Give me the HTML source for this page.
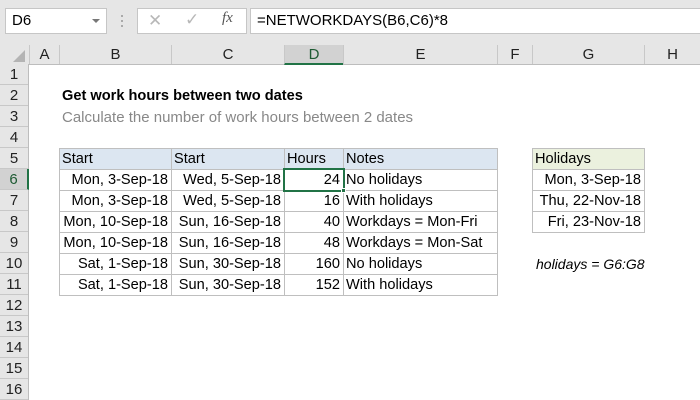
<!DOCTYPE html>
<html><head><meta charset="utf-8"><style>
body{margin:0;width:700px;height:400px;overflow:hidden;background:#fff;font-family:"Liberation Sans",Calibri,sans-serif;position:relative}
.a{position:absolute;box-sizing:border-box}
.t{font-size:14.6px;line-height:21px;white-space:nowrap;color:#000}
.r{text-align:right;padding-right:3px}
.l{padding-left:3px}
.hd{background:#e6e6e6;color:#222;font-size:15px;text-align:center;line-height:19px}
</style></head><body>
<div class="a" style="left:0;top:0;width:700px;height:45px;background:#e6e6e6"></div>
<div class="a" style="left:5px;top:8px;width:102px;height:26px;background:#fff;border:1px solid #c6c6c6"></div>
<div class="a t" style="left:12px;top:10px;font-size:15px">D6</div>
<div class="a" style="left:92px;top:19px;width:0;height:0;border-left:4px solid transparent;border-right:4px solid transparent;border-top:4px solid #777"></div>
<div class="a" style="left:121px;top:15px;width:2px;height:2px;background:#aaa;box-shadow:0 5px 0 #aaa,0 10px 0 #aaa"></div>
<div class="a" style="left:137px;top:8px;width:110px;height:26px;background:#fff;border:1px solid #c6c6c6"></div>
<div class="a" style="left:148px;top:11px;font-size:17px;color:#b8b8b8">✕</div>
<div class="a" style="left:185px;top:10px;font-size:17px;color:#b8b8b8">✓</div>
<div class="a" style="left:222px;top:10px;font-size:15px;font-style:italic;font-family:'Liberation Serif',serif;color:#555">fx</div>
<div class="a" style="left:250px;top:8px;width:460px;height:26px;background:#fff;border:1px solid #c6c6c6"></div>
<div class="a t" style="left:257px;top:10px;font-size:15px">=NETWORKDAYS(B6,C6)*8</div>
<div class="a" style="left:0;top:45px;width:700px;height:20px;background:#e6e6e6;border-bottom:1px solid #bdbdbd"></div>
<div class="a" style="left:13px;top:50px;width:0;height:0;border-left:12px solid transparent;border-bottom:12px solid #b4b4b4"></div>
<div class="a hd" style="left:29px;top:45px;width:30px;border-left:1px solid #c8c8c8">A</div>
<div class="a hd" style="left:59px;top:45px;width:112px;border-left:1px solid #c8c8c8">B</div>
<div class="a hd" style="left:171px;top:45px;width:113px;border-left:1px solid #c8c8c8">C</div>
<div class="a hd" style="left:284px;top:45px;width:59px;height:20px;background:#d2d2d2;border-left:1px solid #c8c8c8;border-bottom:2px solid #217346;color:#1e5b33">D</div>
<div class="a hd" style="left:343px;top:45px;width:154px;border-left:1px solid #c8c8c8">E</div>
<div class="a hd" style="left:497px;top:45px;width:35px;border-left:1px solid #c8c8c8">F</div>
<div class="a hd" style="left:532px;top:45px;width:112px;border-left:1px solid #c8c8c8">G</div>
<div class="a hd" style="left:644px;top:45px;width:56px;border-left:1px solid #c8c8c8">H</div>
<div class="a" style="left:0;top:65px;width:29px;height:335px;background:#e6e6e6;border-right:1px solid #bdbdbd"></div>
<div class="a hd" style="left:0;top:64px;width:28px;height:21px;line-height:21px;border-bottom:1px solid #c8c8c8">1</div>
<div class="a hd" style="left:0;top:85px;width:28px;height:21px;line-height:21px;border-bottom:1px solid #c8c8c8">2</div>
<div class="a hd" style="left:0;top:106px;width:28px;height:21px;line-height:21px;border-bottom:1px solid #c8c8c8">3</div>
<div class="a hd" style="left:0;top:127px;width:28px;height:21px;line-height:21px;border-bottom:1px solid #c8c8c8">4</div>
<div class="a hd" style="left:0;top:148px;width:28px;height:21px;line-height:21px;border-bottom:1px solid #c8c8c8">5</div>
<div class="a hd" style="left:0;top:169px;width:29px;height:21px;line-height:21px;background:#d2d2d2;border-right:2px solid #217346;color:#1e5b33;border-bottom:1px solid #c8c8c8">6</div>
<div class="a hd" style="left:0;top:190px;width:28px;height:21px;line-height:21px;border-bottom:1px solid #c8c8c8">7</div>
<div class="a hd" style="left:0;top:211px;width:28px;height:21px;line-height:21px;border-bottom:1px solid #c8c8c8">8</div>
<div class="a hd" style="left:0;top:232px;width:28px;height:21px;line-height:21px;border-bottom:1px solid #c8c8c8">9</div>
<div class="a hd" style="left:0;top:253px;width:28px;height:21px;line-height:21px;border-bottom:1px solid #c8c8c8">10</div>
<div class="a hd" style="left:0;top:274px;width:28px;height:21px;line-height:21px;border-bottom:1px solid #c8c8c8">11</div>
<div class="a hd" style="left:0;top:295px;width:28px;height:21px;line-height:21px;border-bottom:1px solid #c8c8c8">12</div>
<div class="a hd" style="left:0;top:316px;width:28px;height:21px;line-height:21px;border-bottom:1px solid #c8c8c8">13</div>
<div class="a hd" style="left:0;top:337px;width:28px;height:21px;line-height:21px;border-bottom:1px solid #c8c8c8">14</div>
<div class="a hd" style="left:0;top:358px;width:28px;height:21px;line-height:21px;border-bottom:1px solid #c8c8c8">15</div>
<div class="a hd" style="left:0;top:379px;width:28px;height:21px;line-height:21px;border-bottom:1px solid #c8c8c8">16</div>
<div class="a t" style="left:62px;top:86px;font-weight:bold;font-size:14.6px">Get work hours between two dates</div>
<div class="a t" style="left:62px;top:107px;color:#888;font-size:15px">Calculate the number of work hours between 2 dates</div>
<div class="a" style="left:59px;top:148px;width:439px;height:22px;background:#dce6f1"></div>
<div class="a" style="left:59px;top:148px;width:439px;height:148px;border:1px solid #bfbfbf"></div>
<div class="a" style="left:59px;top:169px;width:439px;height:1px;background:#bfbfbf"></div>
<div class="a" style="left:59px;top:190px;width:439px;height:1px;background:#bfbfbf"></div>
<div class="a" style="left:59px;top:211px;width:439px;height:1px;background:#bfbfbf"></div>
<div class="a" style="left:59px;top:232px;width:439px;height:1px;background:#bfbfbf"></div>
<div class="a" style="left:59px;top:253px;width:439px;height:1px;background:#bfbfbf"></div>
<div class="a" style="left:59px;top:274px;width:439px;height:1px;background:#bfbfbf"></div>
<div class="a" style="left:171px;top:148px;width:1px;height:148px;background:#bfbfbf"></div>
<div class="a" style="left:284px;top:148px;width:1px;height:148px;background:#bfbfbf"></div>
<div class="a" style="left:343px;top:148px;width:1px;height:148px;background:#bfbfbf"></div>
<div class="a t l" style="left:59px;top:149px">Start</div>
<div class="a t l" style="left:171px;top:149px">Start</div>
<div class="a t l" style="left:284px;top:149px">Hours</div>
<div class="a t l" style="left:343px;top:149px">Notes</div>

<div class="a t r" style="left:59px;top:170px;width:112px">Mon, 3-Sep-18</div>
<div class="a t r" style="left:171px;top:170px;width:113px">Wed, 5-Sep-18</div>
<div class="a t r" style="left:284px;top:170px;width:59px">24</div>
<div class="a t l" style="left:343px;top:170px">No holidays</div>
<div class="a t r" style="left:59px;top:191px;width:112px">Mon, 3-Sep-18</div>
<div class="a t r" style="left:171px;top:191px;width:113px">Wed, 5-Sep-18</div>
<div class="a t r" style="left:284px;top:191px;width:59px">16</div>
<div class="a t l" style="left:343px;top:191px">With holidays</div>
<div class="a t r" style="left:59px;top:212px;width:112px">Mon, 10-Sep-18</div>
<div class="a t r" style="left:171px;top:212px;width:113px">Sun, 16-Sep-18</div>
<div class="a t r" style="left:284px;top:212px;width:59px">40</div>
<div class="a t l" style="left:343px;top:212px">Workdays = Mon-Fri</div>
<div class="a t r" style="left:59px;top:233px;width:112px">Mon, 10-Sep-18</div>
<div class="a t r" style="left:171px;top:233px;width:113px">Sun, 16-Sep-18</div>
<div class="a t r" style="left:284px;top:233px;width:59px">48</div>
<div class="a t l" style="left:343px;top:233px">Workdays = Mon-Sat</div>
<div class="a t r" style="left:59px;top:254px;width:112px">Sat, 1-Sep-18</div>
<div class="a t r" style="left:171px;top:254px;width:113px">Sun, 30-Sep-18</div>
<div class="a t r" style="left:284px;top:254px;width:59px">160</div>
<div class="a t l" style="left:343px;top:254px">No holidays</div>
<div class="a t r" style="left:59px;top:275px;width:112px">Sat, 1-Sep-18</div>
<div class="a t r" style="left:171px;top:275px;width:113px">Sun, 30-Sep-18</div>
<div class="a t r" style="left:284px;top:275px;width:59px">152</div>
<div class="a t l" style="left:343px;top:275px">With holidays</div>
<div class="a" style="left:283px;top:168px;width:62px;height:24px;border:2px solid #217346"></div>
<div class="a" style="left:341px;top:188px;width:5px;height:5px;background:#217346;border:1px solid #fff"></div>
<div class="a" style="left:532px;top:148px;width:113px;height:22px;background:#ebf1de"></div>
<div class="a" style="left:532px;top:148px;width:113px;height:85px;border:1px solid #bfbfbf"></div>
<div class="a" style="left:532px;top:169px;width:113px;height:1px;background:#bfbfbf"></div>
<div class="a" style="left:532px;top:190px;width:113px;height:1px;background:#bfbfbf"></div>
<div class="a" style="left:532px;top:211px;width:113px;height:1px;background:#bfbfbf"></div>
<div class="a t l" style="left:532px;top:149px">Holidays</div>
<div class="a t r" style="left:532px;top:170px;width:112px">Mon, 3-Sep-18</div>
<div class="a t r" style="left:532px;top:191px;width:112px">Thu, 22-Nov-18</div>
<div class="a t r" style="left:532px;top:212px;width:112px">Fri, 23-Nov-18</div>
<div class="a t" style="left:536px;top:254px;font-style:italic;font-size:14px">holidays = G6:G8</div>
</body></html>
